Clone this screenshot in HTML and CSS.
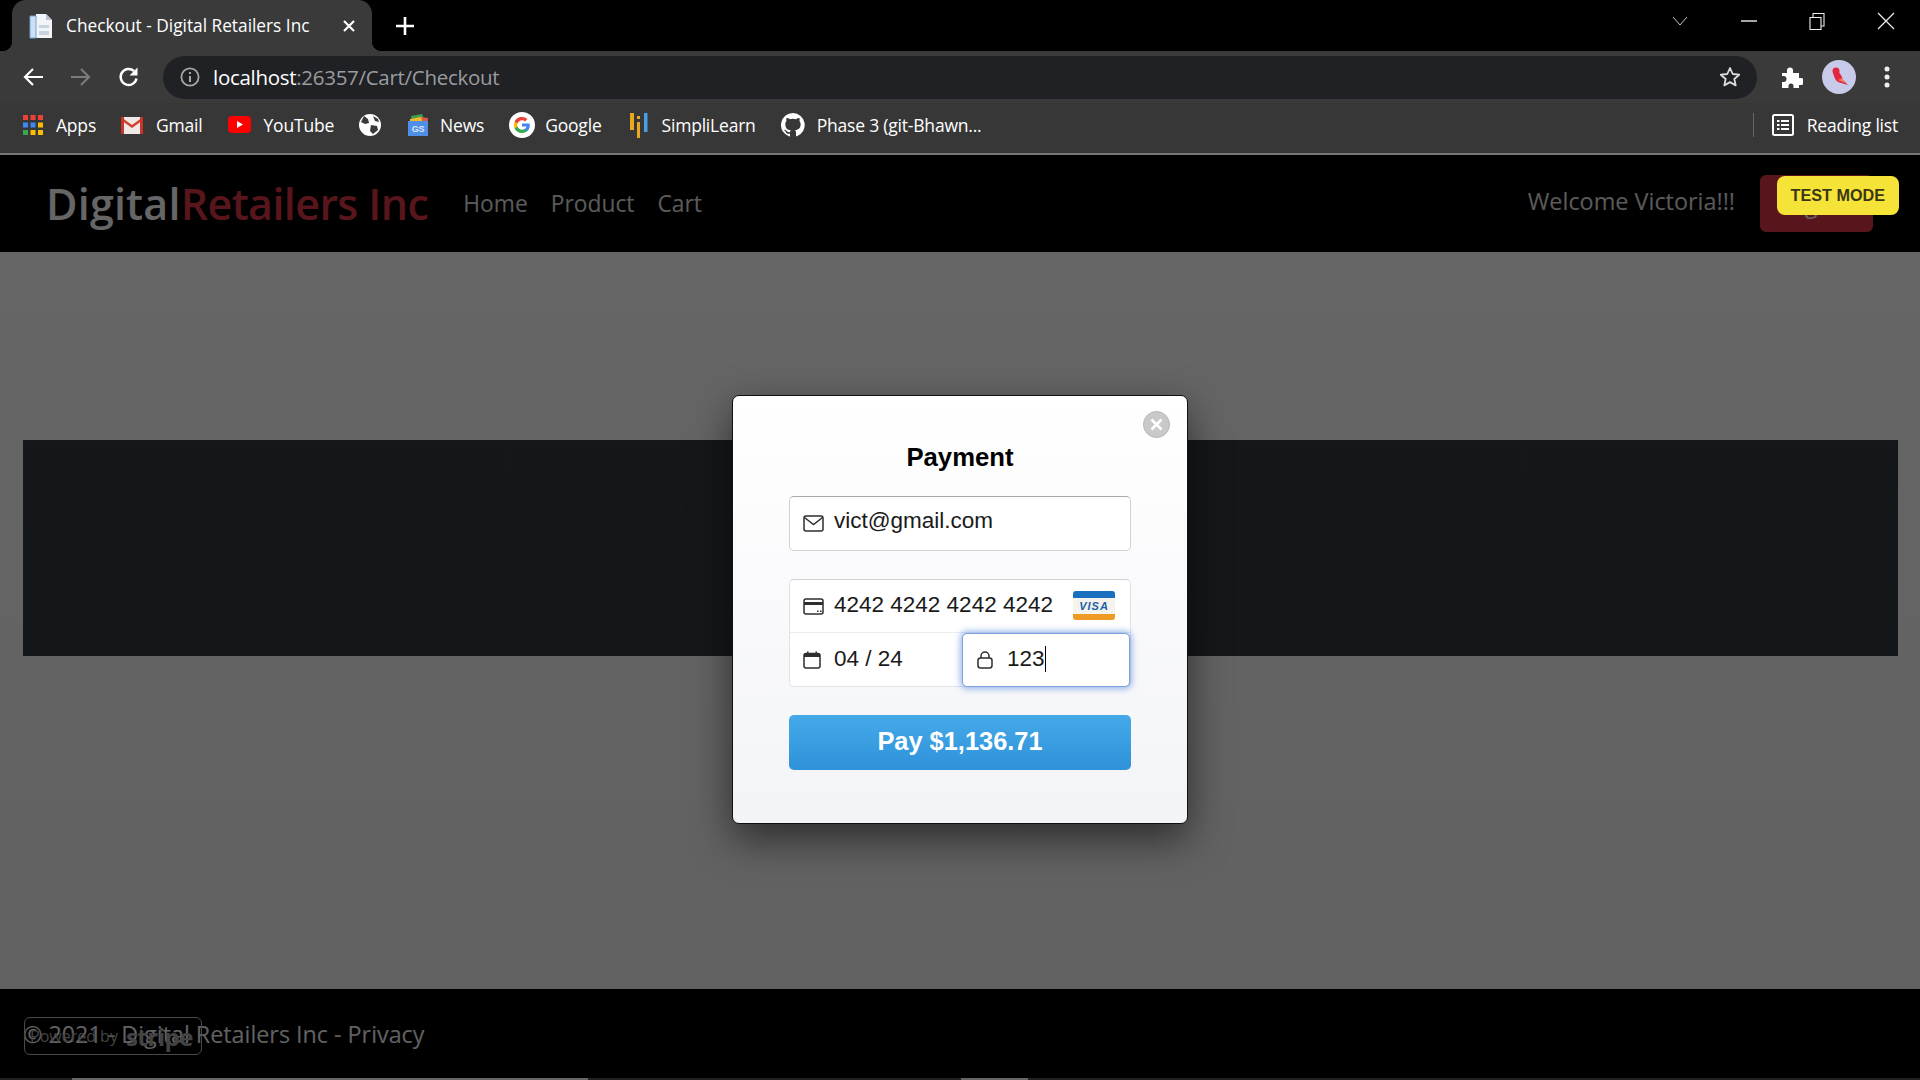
FILE: index.html
```html
<!DOCTYPE html>
<html lang="en">
<head>
    <meta charset="UTF-8">
    <title>Checkout - Digital Retailers Inc</title>
    <link rel="stylesheet" href="styles.css">
</head>
<body>
    <div class="browser">
        <div class="tabstrip">
            <div class="tab">
                <svg class="favicon" width="24" height="26" viewBox="0 0 24 26"><path d="M1 3h6v22H1z" fill="#cfe0f2"/><path d="M7 1h10l6 6v18H7z" fill="#f2f4f7"/><path d="M17 1v6h6z" fill="#b9c4d0"/><path d="M1 3h6v22H1z" fill="none" stroke="#6fa3d8"/><path d="M10 12h10v3H10zM10 18h10v4H10z" fill="#c9d3de"/></svg>
                <span class="tab-title">Checkout - Digital Retailers Inc</span>
                <svg class="tab-close" width="14" height="14" viewBox="0 0 14 14"><path d="M2 2l10 10M12 2L2 12" stroke="#fff" stroke-width="2.2"/></svg>
            </div>
            <svg class="newtab" width="20" height="20" viewBox="0 0 20 20"><path d="M10 1v18M1 10h18" stroke="#fff" stroke-width="2.6"/></svg>
            <div class="winctl">
                <svg width="16" height="10" viewBox="0 0 16 10"><path d="M1 1l7 8 7-8" fill="none" stroke="#ccc"/></svg>
            </div>
            <div class="winctl">
                <svg width="16" height="2" viewBox="0 0 16 2"><path d="M0 1h16" stroke="#eee" stroke-width="1.4"/></svg>
            </div>
            <div class="winctl">
                <svg width="16" height="18" viewBox="0 0 16 18"><path d="M1 5.500h11v12H1zM4 5V1.500h11V14h-3" fill="none" stroke="#eee" stroke-width="1.1"/></svg>
            </div>
            <div class="winctl">
                <svg width="18" height="18" viewBox="0 0 18 18"><path d="M1 1l16 16M17 1L1 17" stroke="#eee" stroke-width="1.2"/></svg>
            </div>
        </div>

        <div class="toolbar">
            <div class="toolbtn"><svg width="22" height="20" viewBox="0 0 22 20"><path d="M21 10H3M11 2l-8 8 8 8" fill="none" stroke="#fff" stroke-width="2.2"/></svg></div>
            <div class="toolbtn"><svg width="22" height="20" viewBox="0 0 22 20"><path d="M1 10h18M11 2l8 8-8 8" fill="none" stroke="#7b7b7b" stroke-width="2.2"/></svg></div>
            <div class="toolbtn"><svg width="22" height="22" viewBox="0 0 22 22"><path d="M18.500 12.500A8 8 0 1 1 16 5" fill="none" stroke="#fff" stroke-width="2.4"/><path d="M19.500 1.500v8h-8z" fill="#fff"/></svg></div>
            <div class="omnibox">
                <svg class="info" width="20" height="20" viewBox="0 0 20 20"><circle cx="10" cy="10" r="8.600" fill="none" stroke="#a5a7aa" stroke-width="1.800"/><path d="M9 9h2v6H9zM9 5h2v2H9z" fill="#a5a7aa"/></svg>
                <span class="url"><b class="host">localhost</b>:26357/Cart/Checkout</span>
                <svg class="star" width="22" height="22" viewBox="0 0 22 22"><path d="M11 2l2.700 6 6.500.7-4.900 4.300 1.400 6.400L11 16.100l-5.700 3.300 1.400-6.400-4.900-4.300 6.500-.7z" fill="none" stroke="#dcdcdc" stroke-width="1.800" stroke-linejoin="round"/></svg>
            </div>
            <div class="toolbar-end">
                <div class="toolbtn"><svg width="24" height="24" viewBox="0 0 24 24"><path d="M3 8h5V5.500a3 3 0 0 1 6 0V8h6v5h2a3.200 3.200 0 0 1 0 7h-2v3h-5.500v-2a2.500 2.500 0 0 0-5 0v2H3v-6h1.500a3 3 0 0 0 0-6H3z" fill="#fff"/></svg></div>
                <div class="toolbtn"><div class="avatar"><svg width="22" height="24" viewBox="0 0 22 24"><circle cx="8" cy="6" r="3.500" fill="#e3263f"/><path d="M5 7c1 6 3 10 8 11l7 2-5-5c-1-4-3-7-6-10z" fill="#e3263f"/><path d="M10 15l7 3-3-5z" fill="#f27a5a"/></svg></div></div>
                <div class="toolbtn"><svg width="6" height="22" viewBox="0 0 6 22"><circle cx="3" cy="3" r="2.500" fill="#f1f1f1"/><circle cx="3" cy="11" r="2.500" fill="#f1f1f1"/><circle cx="3" cy="19" r="2.500" fill="#f1f1f1"/></svg></div>
            </div>
        </div>

        <div class="bookmarks">
            <div class="bm"><svg width="20" height="20" viewBox="0 0 20 20"><path d="M0 0h5v5H0z" fill="#ea4335"/><path d="M7.500 0h5v5h-5z" fill="#ea4335"/><path d="M15 0h5v5h-5z" fill="#ea4335"/><path d="M0 7.500h5v5H0z" fill="#4285f4"/><path d="M7.500 7.500h5v5h-5z" fill="#4285f4"/><path d="M15 7.500h5v5h-5z" fill="#fbbc05"/><path d="M0 15h5v5H0z" fill="#34a853"/><path d="M7.500 15h5v5h-5z" fill="#fbbc05"/><path d="M15 15h5v5h-5z" fill="#fbbc05"/></svg>Apps</div>
            <div class="bm"><svg width="22" height="18" viewBox="0 0 22 18"><path d="M0 1h22v17H0z" fill="#efe9e6"/><path d="M0 1l11 8 11-8v3l-11 8L0 4z" fill="#d33c2f"/><path d="M0 1h3v17H0zM19 1h3v17h-3z" fill="#c9352b"/></svg>Gmail</div>
            <div class="bm"><svg width="23" height="17" viewBox="0 0 23 17"><rect width="23" height="17" rx="4" fill="#f00"/><path d="M9 5l6 3.500L9 12z" fill="#fff"/></svg>YouTube</div>
            <div class="bm"><svg width="22" height="22" viewBox="0 0 22 22"><circle cx="11" cy="11" r="11" fill="#fff"/><path d="M5 2l4 3 1 4-4 1-4-2zM12 11l6 1 1 4-5 4-3-3zM14 2l5 3 1 3-4-1z" fill="#3a3a3a"/></svg></div>
            <div class="bm bm-news"><svg width="24" height="24" viewBox="0 0 24 24"><path d="M5 3l11-2 3 8H6z" fill="#3ea14f"/><path d="M14 4l8 1-1 8z" fill="#e2574a"/><path d="M4 6l11-2 2 6H4z" fill="#f2b72c"/><path d="M2 8h20v15H2z" fill="#4f8fe8"/><text x="12" y="19" class="news-mark">GS</text></svg>News</div>
            <div class="bm bm-google"><svg width="26" height="26" viewBox="0 0 26 26"><circle cx="13" cy="13" r="13" fill="#fff"/><path d="M20.800 13.200c0-.6-.1-1.100-.2-1.600H13v3h4.400a3.800 3.800 0 0 1-1.600 2.500v2h2.600c1.500-1.400 2.400-3.400 2.400-5.900z" fill="#4285f4"/><path d="M13 21c2.200 0 4-.7 5.400-2l-2.600-2c-.7.500-1.700.8-2.800.8-2.100 0-3.900-1.400-4.600-3.300H5.700v2.100A8 8 0 0 0 13 21z" fill="#34a853"/><path d="M8.400 14.500a4.800 4.800 0 0 1 0-3V9.400H5.700a8 8 0 0 0 0 7.200z" fill="#fbbc05"/><path d="M13 8.200c1.200 0 2.300.4 3.100 1.200l2.300-2.300A8 8 0 0 0 5.700 9.400l2.700 2.100c.7-1.900 2.500-3.300 4.600-3.300z" fill="#ea4335"/></svg>Google</div>
            <div class="bm bm-simpli"><svg width="20" height="26" viewBox="0 0 20 26"><path d="M1 1h4v17H1z" fill="#e9a820"/><path d="M8 10h3v16H8zM8 4h3v3H8z" fill="#e9a820"/><path d="M15 1h3.500v19H15z" fill="#4a9fe0"/></svg>SimpliLearn</div>
            <div class="bm bm-github"><svg width="24" height="24" viewBox="0 0 16 16"><path d="M8 0a8 8 0 0 0-2.500 15.600c.4.100.5-.2.500-.4v-1.400c-2.200.5-2.700-1-2.700-1-.4-.9-.9-1.200-.9-1.200-.7-.5.100-.5.100-.5.800.1 1.200.8 1.200.8.700 1.200 1.900.9 2.300.7.100-.5.300-.9.500-1.100-1.800-.2-3.600-.9-3.600-4 0-.9.300-1.600.8-2.100-.1-.2-.4-1 .1-2.100 0 0 .7-.2 2.200.8a7.600 7.600 0 0 1 4 0c1.500-1 2.200-.8 2.200-.8.400 1.100.2 1.900.1 2.100.5.600.8 1.300.8 2.100 0 3.100-1.900 3.700-3.700 3.900.3.300.6.800.6 1.500v2.200c0 .2.100.5.600.4A8 8 0 0 0 8 0z" fill="#fff"/></svg>Phase 3 (git-Bhawn...</div>
            <div class="bm-end">
                <span class="bm-sep"></span>
                <div class="bm"><svg width="22" height="22" viewBox="0 0 22 22"><rect x="1" y="1" width="20" height="20" rx="1.500" fill="none" stroke="#fff" stroke-width="2"/><path d="M5 6h2.500v2H5zM5 10h2.500v2H5zM5 14h2.500v2H5zM9 6h8v2H9zM9 10h8v2H9zM9 14h8v2H9z" fill="#fff"/></svg>Reading list</div>
            </div>
        </div>
    </div>

    <div class="page">
        <nav class="navbar">
            <div class="brand">Digital<span class="brand-red">Retailers Inc</span></div>
            <div class="navlinks">
                <a class="navlink">Home</a>
                <a class="navlink">Product</a>
                <a class="navlink">Cart</a>
            </div>
            <div class="welcome">Welcome Victoria!!!</div>
            <div class="logout">Logout</div>
            <div class="test-badge">TEST MODE</div>
        </nav>

        <main class="content">
            <div class="hero"></div>
        </main>

        <footer class="footer">
            <div class="stripe-badge">Powered by <b>stripe</b></div>
            <span>© 2021 - Digital Retailers Inc - Privacy</span>
        </footer>
        <div class="edge">
            <span class="edge-a"></span><span class="edge-b"></span><span class="edge-c"></span><span class="edge-d"></span><span class="edge-e"></span>
        </div>

        <div class="overlay">
            <div class="modal">
                <div class="modal-close"><svg width="13" height="13" viewBox="0 0 13 13"><path d="M1.500 1.500l10 10M11.500 1.500l-10 10" stroke="#fff" stroke-width="2.600"/></svg></div>
                <h1 class="modal-title">Payment</h1>

                <div class="field field-email">
                    <svg class="field-icon" width="21" height="17" viewBox="0 0 21 17"><rect x="1" y="1" width="19" height="15" rx="2" fill="none" stroke="#2e2e2e" stroke-width="1.500"/><path d="M1.500 2.500l9 7 9-7" fill="none" stroke="#2e2e2e" stroke-width="1.500"/></svg>
                    <span>vict@gmail.com</span>
                </div>

                <div class="card-group">
                    <div class="field card-number">
                        <svg class="field-icon" width="21" height="17" viewBox="0 0 21 17"><rect x="1" y="1" width="19" height="15" rx="2" fill="none" stroke="#2e2e2e" stroke-width="1.500"/><path d="M1 4h19v3H1z" fill="#2e2e2e"/><path d="M14 12.500h1.500V14H14zM17 12.500h1.500V14H17z" fill="#2e2e2e"/></svg>
                        <span>4242 4242 4242 4242</span>
                        <svg class="visa" width="42" height="29" viewBox="0 0 42 29">
                            <rect width="42" height="29" rx="3" fill="#f5f3ee"/>
                            <path d="M3 0h36a3 3 0 0 1 3 3v4H0V3a3 3 0 0 1 3-3z" fill="#1a6fbf"/>
                            <path d="M0 23h42v3a3 3 0 0 1-3 3H3a3 3 0 0 1-3-3z" fill="#ef9a25"/>
                            <text x="21" y="18.500" class="visa-mark">VISA</text>
                        </svg>
                    </div>
                    <div class="card-row">
                        <div class="field card-exp">
                            <svg class="field-icon" width="18" height="18" viewBox="0 0 18 18"><rect x="1" y="2.500" width="16" height="14.500" rx="2" fill="none" stroke="#2e2e2e" stroke-width="1.500"/><path d="M1 3h16v3H1zM4 0.500h1.500V3H4zM12.500 0.500H14V3h-1.500z" fill="#2e2e2e"/></svg>
                            <span>04 / 24</span>
                        </div>
                        <div class="field card-cvc">
                            <svg class="field-icon" width="16" height="18" viewBox="0 0 16 18"><rect x="1" y="7" width="14" height="10" rx="2.500" fill="none" stroke="#2e2e2e" stroke-width="1.500"/><path d="M4 7V5a4 4 0 0 1 8 0v2" fill="none" stroke="#2e2e2e" stroke-width="1.500"/></svg>
                            <span class="cvc-value">123</span>
                        </div>
                    </div>
                </div>

                <div class="pay-btn"><span>Pay $1,136.71</span></div>
            </div>
        </div>
    </div>
</body>
</html>
```

FILE: styles.css
```css
* {
    box-sizing: border-box;
}

html, body {
    margin: 0;
    height: 100%;
}

body {
    display: flex;
    flex-direction: column;
    height: 1080px;
    overflow: hidden;
    background: #fff;
    font-family: "Open Sans", "Noto Sans", sans-serif;
}

/* browser window */
.browser {
    flex: none;
    color: #fff;
}

.tabstrip {
    display: flex;
    align-items: center;
    height: 51px;
    background: #000;
}

.tab {
    position: relative;
    display: flex;
    align-items: center;
    align-self: flex-end;
    width: 360px;
    height: 51px;
    margin-left: 12px;
    padding: 0 16px 0 17px;
    background: #3a3a3a;
    border-radius: 14px 14px 0 0;
}

.tab::before,
.tab::after {
    content: "";
    position: absolute;
    bottom: 0;
    width: 10px;
    height: 10px;
}

.tab::before {
    left: -10px;
    background: radial-gradient(circle at 0 0, #000 10px, #3a3a3a 10.500px);
}

.tab::after {
    right: -10px;
    background: radial-gradient(circle at 100% 0, #000 10px, #3a3a3a 10.500px);
}

.favicon {
    flex: none;
}

.tab-title {
    margin-left: 13px;
    font-size: 17.300px;
    white-space: nowrap;
}

.tab-close {
    flex: none;
    margin-left: auto;
}

.newtab {
    margin-left: 23px;
    margin-right: auto;
}

.winctl {
    display: flex;
    align-items: center;
    justify-content: center;
    width: 68.500px;
    height: 42px;
    align-self: flex-start;
}

.toolbar {
    display: flex;
    align-items: center;
    height: 52px;
    padding-left: 9px;
    background: #3a3a3a;
}

.toolbtn {
    display: flex;
    align-items: center;
    justify-content: center;
    flex: none;
    width: 48px;
    height: 48px;
}

.omnibox {
    display: flex;
    align-items: center;
    flex: none;
    width: 1594px;
    height: 43px;
    margin-left: 10px;
    padding: 0 16px 0 17px;
    background: #202124;
    border-radius: 22px;
}

.url {
    margin-left: 13px;
    color: #9a9c9f;
    font-size: 20.500px;
    letter-spacing: -0.290px;
}

.host {
    color: #fff;
    font-weight: 400;
}

.star {
    margin-left: auto;
}

.toolbar-end {
    display: flex;
    margin-left: 10px;
}

.avatar {
    display: flex;
    align-items: center;
    justify-content: center;
    width: 34px;
    height: 34px;
    background: #c7cbe9;
    border-radius: 50%;
}

.bookmarks {
    display: flex;
    align-items: center;
    gap: 25px;
    height: 52px;
    padding: 0 22px 7px 23px;
    background: #373737;
    border-bottom: 2px solid #777;
    font-size: 17.500px;
}

.bm {
    display: flex;
    align-items: center;
    gap: 13px;
    white-space: nowrap;
    letter-spacing: -0.200px;
}

.bm svg {
    flex: none;
}

.bm-news {
    gap: 10px;
}

.bm-google {
    gap: 10px;
}

.bm-simpli {
    margin-left: 2px;
}

.bm-github {
    gap: 12px;
}

.bm-end {
    display: flex;
    align-items: center;
    gap: 18px;
    margin-left: auto;
}

.bm-sep {
    width: 1px;
    height: 24px;
    background: #666;
}

.news-mark {
    font: bold 9px "Liberation Sans", sans-serif;
    fill: #d9e6fb;
    text-anchor: middle;
}

/* site page */
.page {
    position: relative;
    display: flex;
    flex: 1;
    flex-direction: column;
    min-height: 0;
}

.navbar {
    display: flex;
    align-items: center;
    flex: none;
    height: 97px;
    padding: 0 47px 0 46px;
    background: #000;
    color: #e2e2e2;
}

.brand {
    color: #fff;
    font-size: 43px;
    font-weight: 600;
    letter-spacing: 0.200px;
}

.brand-red {
    color: #dc3545;
    letter-spacing: -0.600px;
}

.navlinks {
    display: flex;
    gap: 23px;
    margin-left: 35px;
    font-size: 22.800px;
}

.welcome {
    margin-left: auto;
    margin-bottom: 6px;
    font-size: 23.400px;
}

.logout {
    display: flex;
    align-items: center;
    justify-content: center;
    width: 113px;
    height: 57px;
    margin-left: 25px;
    background: #dc3545;
    border-radius: 6px;
    color: #fff;
    font-size: 23px;
}

.test-badge {
    position: absolute;
    top: 21px;
    right: 21px;
    z-index: 20;
    padding: 10px 14px;
    background: #f6e337;
    border-radius: 8px;
    color: #3a3712;
    font: bold 16.200px/19px "Liberation Sans", sans-serif;
}

.content {
    flex: 1;
    padding: 188px 22px 0 23px;
    background: #fff;
}

.hero {
    height: 216px;
    background: #343a40;
}

.footer {
    position: relative;
    display: flex;
    align-items: center;
    flex: none;
    height: 89px;
    padding: 1px 23px 0;
    background: #000;
    color: #fff;
    font-size: 23.300px;
}

.stripe-badge {
    position: absolute;
    top: 28px;
    left: 24px;
    display: flex;
    align-items: center;
    gap: 8px;
    width: 178px;
    height: 38px;
    padding: 0 5px;
    border: 1px solid #c0c0c0;
    border-radius: 6px;
    color: #b0b0b0;
    font-size: 16px;
}

.stripe-badge b {
    font-size: 24px;
    letter-spacing: -0.500px;
}

.edge {
    display: flex;
    flex: none;
    height: 2px;
    position: relative;
    z-index: 20;
}

.edge-a { width: 72px; background: #222; }
.edge-b { width: 516px; background: #666; }
.edge-c { width: 373px; background: #222; }
.edge-d { width: 67px; background: #666; }
.edge-e { flex: 1; background: #222; }

/* checkout dialog */
.overlay {
    position: absolute;
    top: 0;
    left: 0;
    right: 0;
    bottom: 2px;
    z-index: 10;
    display: flex;
    justify-content: center;
    padding-top: 240px;
    background: linear-gradient(rgba(0, 0, 0, 0.6), rgba(0, 0, 0, 0.62));
    font-family: "Liberation Sans", Arial, sans-serif;
}

.modal {
    position: relative;
    display: flex;
    flex-direction: column;
    width: 456px;
    height: 429px;
    padding: 46px 56px 0;
    background: linear-gradient(#fff, #f3f4f8);
    border: 1px solid #111;
    border-radius: 7px;
    box-shadow: 0 15px 40px rgba(0, 0, 0, 0.55);
}

.modal-close {
    position: absolute;
    top: 15px;
    right: 17px;
    display: flex;
    align-items: center;
    justify-content: center;
    width: 27px;
    height: 27px;
    background: #c9c9c9;
    border: 1px solid #b5b5b5;
    border-radius: 50%;
}

.modal-title {
    margin: 0 0 24px;
    color: #000;
    font-size: 25.700px;
    font-weight: bold;
    line-height: 30px;
    text-align: center;
}

.field {
    display: flex;
    align-items: center;
    height: 53px;
    padding-left: 14px;
    color: #1a1a1a;
    font-size: 22.500px;
}

.field span {
    margin-bottom: 2px;
}

.field-icon {
    flex: none;
}

.field-email {
    height: 55px;
    background: #fff;
    border: 1px solid #d3d3d6;
    border-top-color: #a9a9a9;
    border-radius: 5px;
    padding-left: 13px;
}

.field-email span {
    margin-left: 10px;
    margin-bottom: 6px;
}

.card-group {
    height: 108px;
    margin-top: 28px;
    background: #fff;
    border: 1px solid #e2e2e6;
    border-top-color: #cfcfd3;
    border-radius: 5px;
}

.card-number {
    border-bottom: 1px solid #ecedf0;
    height: 53px;
    padding-left: 13px;
}

.card-number span {
    margin-left: 10px;
}

.visa {
    margin-left: auto;
    margin-right: 15px;
    margin-bottom: 2px;
}

.visa-mark {
    fill: #1a5ea8;
    font: italic bold 11px "Liberation Sans", sans-serif;
    letter-spacing: 1px;
    text-anchor: middle;
}

.card-row {
    display: flex;
}

.card-exp {
    flex: 1;
    padding-left: 13px;
}

.card-exp span {
    margin-left: 13px;
}

.card-cvc {
    width: 168px;
    height: 54px;
    margin-bottom: -1px;
    padding-left: 14px;
    background: #fff;
    border: 1px solid #7d9fdc;
    border-radius: 5px;
    box-shadow: 0 0 6px 2px rgba(90, 140, 225, 0.6);
}

.cvc-value {
    margin-left: 14px;
    border-right: 1px solid #000;
    line-height: 26px;
}

.pay-btn {
    display: flex;
    align-items: center;
    justify-content: center;
    height: 55px;
    margin-top: 28px;
    background: linear-gradient(#45a9e8, #2f92db);
    border-radius: 5px;
    color: #fff;
    font-size: 25.400px;
    font-weight: bold;
}

.pay-btn span {
    margin-bottom: 2px;
}
```
